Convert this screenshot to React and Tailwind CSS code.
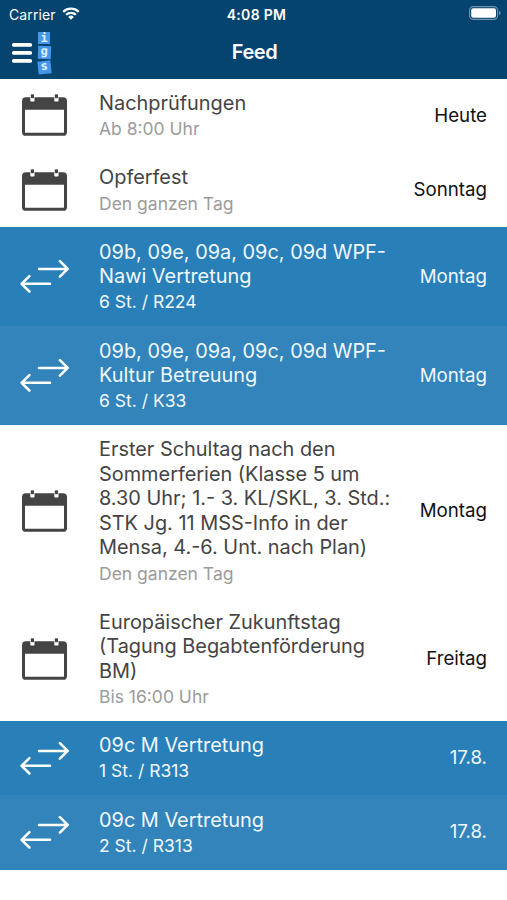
import React from 'react';
import clsx from 'clsx';

const entries = [
  { type: 'event', lines: ['Nachprüfungen'], info: 'Ab 8:00 Uhr', day: 'Heute' },
  { type: 'event', lines: ['Opferfest'], info: 'Den ganzen Tag', day: 'Sonntag' },
  {
    type: 'change',
    lines: ['09b, 09e, 09a, 09c, 09d WPF-', 'Nawi Vertretung'],
    info: '6 St. / R224',
    day: 'Montag',
  },
  {
    type: 'change',
    light: true,
    lines: ['09b, 09e, 09a, 09c, 09d WPF-', 'Kultur Betreuung'],
    info: '6 St. / K33',
    day: 'Montag',
  },
  {
    type: 'event',
    lines: [
      'Erster Schultag nach den',
      'Sommerferien (Klasse 5 um',
      '8.30 Uhr; 1.- 3. KL/SKL, 3. Std.:',
      'STK Jg. 11 MSS-Info in der',
      'Mensa, 4.-6. Unt. nach Plan)',
    ],
    info: 'Den ganzen Tag',
    day: 'Montag',
  },
  {
    type: 'event',
    lines: ['Europäischer Zukunftstag', '(Tagung Begabtenförderung', 'BM)'],
    info: 'Bis 16:00 Uhr',
    day: 'Freitag',
  },
  { type: 'change', lines: ['09c M Vertretung'], info: '1 St. / R313', day: '17.8.' },
  { type: 'change', light: true, lines: ['09c M Vertretung'], info: '2 St. / R313', day: '17.8.' },
];

const CalendarIcon = () => (
  <svg className="mb-[1px] ml-[22px] h-[42px] w-[45px]" viewBox="0 0 45 42" fill="none">
    <rect x="1.5" y="4.7" width="42" height="35.6" rx="2.4" stroke="#444" strokeWidth="3" />
    <path d="M1.5 5h42v10.8h-42z" fill="#444" />
    <rect x="8.3" y="2.6" width="4.2" height="4.9" rx="0.8" fill="#fff" />
    <rect x="32.3" y="2.6" width="4.2" height="4.9" rx="0.8" fill="#fff" />
    <rect x="8.8" y="0.2" width="3.2" height="4" rx="1" fill="#444" />
    <rect x="32.8" y="0.2" width="3.2" height="4" rx="1" fill="#444" />
  </svg>
);

const SwapIcon = () => (
  <svg
    className="mb-[1px] ml-5 h-[34px] w-[49px]"
    viewBox="0 0 49 34"
    fill="none"
    stroke="#fff"
    strokeWidth="2.5"
    strokeLinecap="round"
    strokeLinejoin="round"
  >
    <path d="M19 9.9h28.6M39.9 2.2l7.8 7.7-7.8 7.7" />
    <path d="M30 24.8H1.6M9.4 17.1l-7.8 7.7 7.8 7.7" />
  </svg>
);

const MenuIcon = () => (
  <svg className="h-[22px] w-5" viewBox="0 0 20 22" fill="#fff">
    <rect x="0" y="0.9" width="20" height="3.8" rx="1.5" />
    <rect x="0" y="8.9" width="20" height="3.8" rx="1.5" />
    <rect x="0" y="16.9" width="20" height="3.8" rx="1.5" />
  </svg>
);

const WifiIcon = () => (
  <svg className="mb-[1px] ml-[6px] h-[13px] w-[18px]" viewBox="0 0 18 13" fill="none" stroke="#fff">
    <path d="M1.2 4.8a11.2 11.2 0 0 1 15.6 0" strokeWidth="2.3" />
    <path d="M4.1 7.8a7 7 0 0 1 9.8 0" strokeWidth="2.3" />
    <path d="M9 12.7L6.2 9.9a4 4 0 0 1 5.6 0z" fill="#fff" stroke="none" />
  </svg>
);

const BatteryIcon = () => (
  <svg className="mb-[2px] h-[14px] w-8" viewBox="0 0 32 14" fill="none">
    <rect x="0.6" y="0.6" width="28" height="12.8" rx="3.6" stroke="#6f92ae" strokeWidth="1.1" />
    <rect x="2.2" y="2.2" width="24.8" height="9.6" rx="2" fill="#fff" />
    <path d="M30.2 4.8c1.8.8 1.8 3.6 0 4.4z" fill="#7f9fb8" />
  </svg>
);

const Logo = () => (
  <div className="ml-[5.5px] flex w-[13px] flex-col items-center gap-[1.8px] font-['DejaVu_Sans_Mono'] text-[12px] font-bold leading-[12px] text-[#e4f2ff]">
    <span className="h-[12.5px] w-[12.5px] bg-[#4496e8] text-center">i</span>
    <span className="h-[12.5px] w-[12.5px] rotate-2 bg-[#4496e8] text-center leading-[10px]">g</span>
    <span className="h-[12.5px] w-[12.5px] -rotate-6 bg-[#4496e8] text-center leading-[11px]">s</span>
  </div>
);

const Header = () => (
  <header className="h-[78.6px] bg-[#05446f] text-white">
    <div className="grid h-[28px] grid-cols-3 items-center pl-[9px] pr-[6px]">
      <div className="flex items-center">
        <span className="text-[14px] tracking-[0.1px]">Carrier</span>
        <WifiIcon />
      </div>
      <span className="pl-[3px] text-center text-[14px] font-semibold tracking-[0.3px]">4:08 PM</span>
      <div className="flex justify-end">
        <BatteryIcon />
      </div>
    </div>
    <div className="grid h-[49px] grid-cols-3 items-center">
      <div className="flex items-center pl-3">
        <MenuIcon />
        <Logo />
      </div>
      <h1 className="pb-px pl-[2px] text-center text-[20px] font-semibold tracking-[-0.4px]">Feed</h1>
    </div>
  </header>
);

const FeedRow = ({ entry }) => {
  const change = entry.type === 'change';
  return (
    <li
      className={clsx(
        'flex items-center',
        change ? 'text-[#f0f8ff]' : 'bg-white text-[#444]',
        change && (entry.light ? 'bg-[#3284bb]' : 'bg-[#2980b9]')
      )}
    >
      <div className="w-[99px] shrink-0">{change ? <SwapIcon /> : <CalendarIcon />}</div>
      <div className="flex-1 pb-[12.1px] pt-[12.3px] whitespace-nowrap">
        <h2 className="text-[19.9px] leading-[24.5px]">
          {entry.lines.map((line) => (
            <span key={line} className="block">
              <span>{line}</span>
            </span>
          ))}
        </h2>
        <p className={clsx('pt-[1.8px] pb-[0.2px] text-[17.5px] leading-[23.5px]', !change && 'text-[#9b9b9b]')}>
          <span>{entry.info}</span>
        </p>
      </div>
      <span className={clsx('pr-5 text-[18.7px]', !change && 'text-[#111]')}>{entry.day}</span>
    </li>
  );
};

const App = () => {
  return (
    <div className="h-[900px] overflow-hidden bg-white font-['Inter',sans-serif]">
      <Header />
      <ul>
        {entries.map((entry, i) => (
          <FeedRow key={i} entry={entry} />
        ))}
      </ul>
    </div>
  );
};

export default App;
